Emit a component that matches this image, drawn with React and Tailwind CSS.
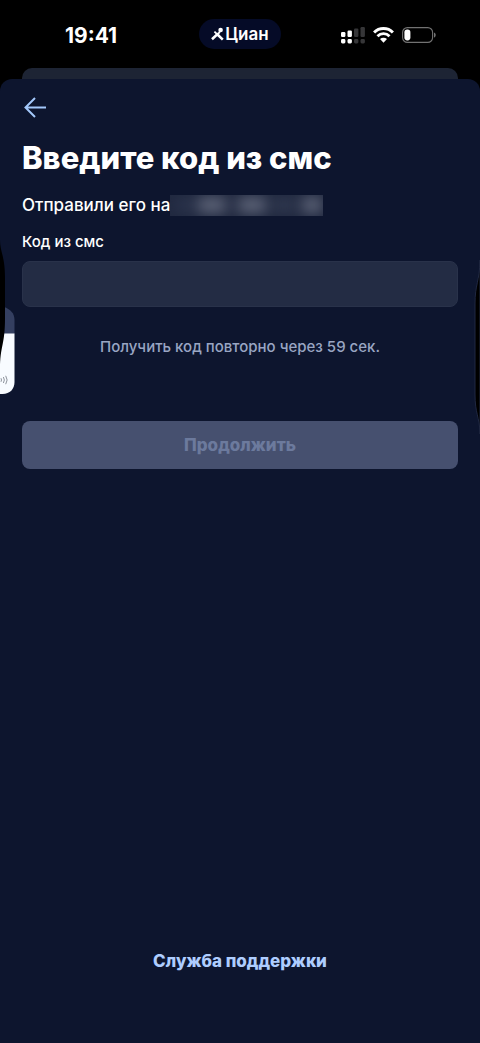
import { useState } from 'react'

const SignalIcon = () => (
  <svg width="24" height="17" viewBox="0 0 24 17" aria-hidden="true">
    <g fill="#fff">
      <rect x="0" y="5" width="4.4" height="5" rx="1.2" />
      <rect x="6.5" y="3.5" width="4.4" height="6.5" rx="1.2" />
      <rect x="0" y="12" width="4.4" height="4.4" rx="1.4" />
      <rect x="6.5" y="12" width="4.4" height="4.4" rx="1.4" />
    </g>
    <g fill="#363638">
      <rect x="13" y="1.5" width="4.4" height="8.5" rx="1.2" />
      <rect x="19.5" y="0" width="4.4" height="10" rx="1.2" />
      <rect x="13" y="12" width="4.4" height="4.4" rx="1.4" />
      <rect x="19.5" y="12" width="4.4" height="4.4" rx="1.4" />
    </g>
  </svg>
)

const WifiIcon = () => (
  <svg width="21" height="16" viewBox="0 0 21 16" fill="none" aria-hidden="true">
    <path d="M1.1 5.5a13.3 13.3 0 0 1 18.8 0" stroke="#fff" strokeWidth="3" />
    <path d="M4.5 9.2a8.2 8.2 0 0 1 12 0" stroke="#fff" strokeWidth="2.8" />
    <path d="M7 12.1a5 5 0 0 1 7 0L10.5 15.8Z" fill="#fff" />
  </svg>
)

const BatteryIcon = () => (
  <svg width="34" height="16" viewBox="0 0 34 16" fill="none" aria-hidden="true">
    <rect x="0.6" y="0.6" width="30" height="14.8" rx="4.8" stroke="#727272" strokeWidth="1.1" />
    <rect x="2.4" y="2.6" width="6" height="10.8" rx="2.8" fill="#fff" />
    <path d="M32 5.4c1.2.5 1.7 1.5 1.7 2.6s-.5 2.1-1.7 2.6Z" fill="#727272" />
  </svg>
)

const CianMark = () => (
  <svg width="14" height="14" viewBox="0 0 14 14" fill="none" aria-hidden="true">
    <circle cx="9.6" cy="3" r="2.3" fill="#fff" />
    <path d="M1 12.3L6.3 7.4L11.8 12.6" stroke="#fff" strokeWidth="2.6" />
    <path d="M3.4 4.6L6.8 7.8L8.8 4.6" stroke="#fff" strokeWidth="1.8" />
  </svg>
)

// phone side buttons and the widget that peeks in from the left
const LeftEdge = () => (
  <svg className="absolute left-0 top-[240px]" width="16" height="160" viewBox="0 0 16 160" aria-hidden="true">
    <path d="M0 67h4c6 2 10.5 6 10.5 13v14H0Z" fill="#343f60" />
    <path d="M0 93.5h14.5V142c0 7-4.500 12-12 12H0Z" fill="#f8fbff" />
    <path d="M0 0c0 12 5 16 5 38v40c0 28-5 27-5 52Z" fill="#000" />
    <path d="M1 138.2q1 1.800 0 3.600M3.400 137q1.900 3 0 6M5.700 135.800q2.900 4.200 0 8.400" stroke="#8f949d" strokeWidth="1" fill="none" />
  </svg>
)

const RightEdge = () => (
  <svg className="absolute right-0 top-[250px]" width="8" height="190" viewBox="0 0 8 190" aria-hidden="true">
    <path d="M8 10C7.5 32 3 34 3 54v90c0 20 4.5 22 5 40Z" fill="#000" stroke="#202842" strokeWidth="1" />
  </svg>
)

// phone number is masked with a soft smear
const HiddenPhone = () => (
  <span className="relative h-[21px] w-[153px] overflow-hidden bg-[#20283f]">
    <span className="absolute inset-0 flex items-center blur-[7px]">
      <span className="ml-1 h-3 w-5 bg-[#2c354e]" />
      <span className="ml-1 h-4 w-7 bg-[#5d6478]" />
      <span className="ml-3 h-4 w-7 bg-[#5d6478]" />
      <span className="ml-2 h-3 w-5 bg-[#343d54]" />
      <span className="ml-2 h-4 w-5 bg-[#5d6478]" />
    </span>
  </span>
)

export default function App() {
  const [code, setCode] = useState('')

  return (
    <div className="relative flex min-h-screen flex-col overflow-hidden bg-black font-['Inter',sans-serif] text-white">
      <header className="grid h-[68px] grid-cols-3 items-center">
        <div className="pl-[65px] pt-1 text-[21px] leading-6 font-bold">19:41</div>
        <div className="flex h-[30px] w-[82px] items-center justify-center justify-self-center rounded-full bg-[#050b27]">
          <CianMark />
          <span className="text-[17px] leading-5 font-semibold">Циан</span>
        </div>
        <div className="flex items-center gap-2 justify-self-end pt-0.5 pr-11">
          <SignalIcon />
          <WifiIcon />
          <BatteryIcon />
        </div>
      </header>

      <div className="mx-[22px] h-[11px] rounded-t-[10px] bg-[#1d2434]" />

      <main className="flex flex-1 flex-col rounded-t-[12px] bg-[#0d152e] px-[22px] pt-4">
        <button type="button" aria-label="Назад" className="h-6 w-6 text-[#a3c8fb]">
          <svg width="25" height="24" viewBox="0 0 25 24" fill="none" stroke="currentColor" strokeWidth="2">
            <path d="M24 12.5H3.5M13 3L3.5 12.5L13 22" />
          </svg>
        </button>

        <h1 className="mt-5 text-[31px] leading-[38px] font-extrabold">Введите код из смс</h1>

        <div className="mt-[18px] flex h-5 items-center text-[17px] leading-5 font-medium">
          <span>Отправили его на</span>
          <HiddenPhone />
        </div>

        <form className="flex flex-col" onSubmit={(e) => e.preventDefault()}>
          <label htmlFor="code" className="mt-[15px] text-[15px] leading-6 font-medium">
            Код из смс
          </label>
          <input
            id="code"
            value={code}
            inputMode="numeric"
            autoComplete="one-time-code"
            onChange={(e) => setCode(e.target.value)}
            className="mt-[7px] h-[46px] rounded-lg border border-[#29324a] bg-[#232c44] px-4 text-[17px] outline-none"
          />
          <p className="mt-7 text-center text-[15px] leading-6 font-medium text-[#99a5c3]">
            Получить код повторно через 59 сек.
          </p>
          <button
            disabled={!code}
            className="mt-[62px] h-12 rounded-lg bg-[#46506f] pt-0.5 text-[17px] font-extrabold text-[#6c7a9d]"
          >
            Продолжить
          </button>
        </form>

        <a href="#support" className="mt-auto mb-[70px] self-center text-[17px] leading-6 font-extrabold text-[#aecdff]">
          Служба поддержки
        </a>
      </main>

      <LeftEdge />
      <RightEdge />
    </div>
  )
}
